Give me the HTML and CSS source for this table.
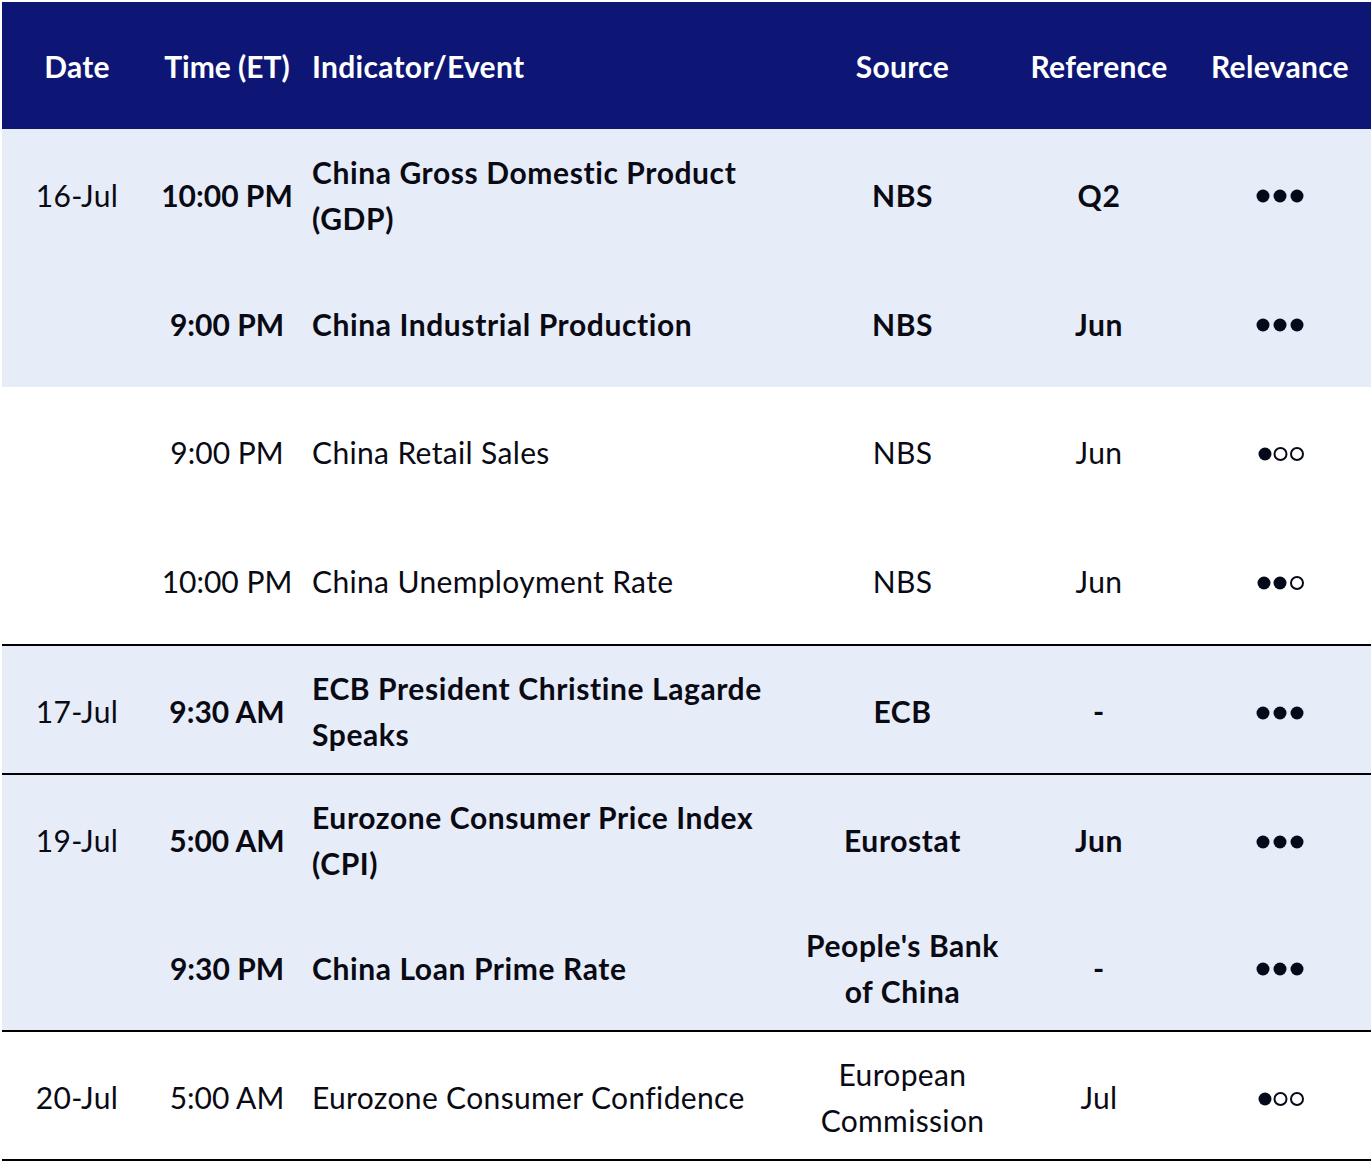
FILE: index.html
```html
<!DOCTYPE html>
<html>
<head>
<meta charset="utf-8">
<link rel="stylesheet" href="styles.css">
</head>
<body>
<div class="table">
  <div class="row head">
    <div class="c date">Date</div>
    <div class="c time">Time (ET)</div>
    <div class="c ind">Indicator/Event</div>
    <div class="c src">Source</div>
    <div class="c ref">Reference</div>
    <div class="c rel">Relevance</div>
  </div>

  <div class="group tall">
    <div class="row blue bold">
      <div class="c date norm">16-Jul</div>
      <div class="c time">10:00 PM</div>
      <div class="c ind">China Gross Domestic Product<br>(GDP)</div>
      <div class="c src">NBS</div>
      <div class="c ref">Q2</div>
      <div class="c rel"><svg class="dots" width="50" height="16" viewBox="0 0 50 16"><circle cx="8" cy="8" r="6.5"/><circle cx="25" cy="8" r="6.5"/><circle cx="42" cy="8" r="6.5"/></svg></div>
    </div>
    <div class="row blue bold">
      <div class="c date"></div>
      <div class="c time">9:00 PM</div>
      <div class="c ind">China Industrial Production</div>
      <div class="c src">NBS</div>
      <div class="c ref">Jun</div>
      <div class="c rel"><svg class="dots" width="50" height="16" viewBox="0 0 50 16"><circle cx="8" cy="8" r="6.5"/><circle cx="25" cy="8" r="6.5"/><circle cx="42" cy="8" r="6.5"/></svg></div>
    </div>
    <div class="row">
      <div class="c date"></div>
      <div class="c time">9:00 PM</div>
      <div class="c ind">China Retail Sales</div>
      <div class="c src">NBS</div>
      <div class="c ref">Jun</div>
      <div class="c rel"><svg class="dots" width="50" height="16" viewBox="0 0 50 16"><circle cx="10" cy="8" r="6.5"/><circle class="hollow" cx="25.5" cy="8" r="6"/><circle class="hollow" cx="42" cy="8" r="6"/></svg></div>
    </div>
    <div class="row">
      <div class="c date"></div>
      <div class="c time">10:00 PM</div>
      <div class="c ind">China Unemployment Rate</div>
      <div class="c src">NBS</div>
      <div class="c ref">Jun</div>
      <div class="c rel"><svg class="dots" width="50" height="16" viewBox="0 0 50 16"><circle cx="9" cy="8" r="6.5"/><circle cx="25" cy="8" r="6.5"/><circle class="hollow" cx="42" cy="8" r="6"/></svg></div>
    </div>
  </div>

  <div class="group short">
    <div class="row blue bold">
      <div class="c date norm">17-Jul</div>
      <div class="c time">9:30 AM</div>
      <div class="c ind">ECB President Christine Lagarde<br>Speaks</div>
      <div class="c src">ECB</div>
      <div class="c ref">-</div>
      <div class="c rel"><svg class="dots" width="50" height="16" viewBox="0 0 50 16"><circle cx="8" cy="8" r="6.5"/><circle cx="25" cy="8" r="6.5"/><circle cx="42" cy="8" r="6.5"/></svg></div>
    </div>
  </div>

  <div class="group mid">
    <div class="row blue bold">
      <div class="c date norm">19-Jul</div>
      <div class="c time">5:00 AM</div>
      <div class="c ind">Eurozone Consumer Price Index<br>(CPI)</div>
      <div class="c src">Eurostat</div>
      <div class="c ref">Jun</div>
      <div class="c rel"><svg class="dots" width="50" height="16" viewBox="0 0 50 16"><circle cx="8" cy="8" r="6.5"/><circle cx="25" cy="8" r="6.5"/><circle cx="42" cy="8" r="6.5"/></svg></div>
    </div>
    <div class="row blue bold">
      <div class="c date"></div>
      <div class="c time">9:30 PM</div>
      <div class="c ind">China Loan Prime Rate</div>
      <div class="c src">People's Bank<br>of China</div>
      <div class="c ref">-</div>
      <div class="c rel"><svg class="dots" width="50" height="16" viewBox="0 0 50 16"><circle cx="8" cy="8" r="6.5"/><circle cx="25" cy="8" r="6.5"/><circle cx="42" cy="8" r="6.5"/></svg></div>
    </div>
  </div>

  <div class="group short">
    <div class="row">
      <div class="c date">20-Jul</div>
      <div class="c time">5:00 AM</div>
      <div class="c ind">Eurozone Consumer Confidence</div>
      <div class="c src">European<br>Commission</div>
      <div class="c ref">Jul</div>
      <div class="c rel"><svg class="dots" width="50" height="16" viewBox="0 0 50 16"><circle cx="10" cy="8" r="6.5"/><circle class="hollow" cx="25.5" cy="8" r="6"/><circle class="hollow" cx="42" cy="8" r="6"/></svg></div>
    </div>
  </div>
</div>
</body>
</html>
```

FILE: styles.css
```css
html, body {
  margin: 0;
  padding: 0;
  background: #ffffff;
}

body {
  padding: 2px 0 0 2px;
  font-family: Lato, "Open Sans", "Liberation Sans", sans-serif;
  color: #0a0a14;
}

.table {
  width: 1369px;
}

.row {
  display: grid;
  grid-template-columns: 150px 150px 498px 205px 188px 178px;
  height: 128px;
  font-size: 30px;
  line-height: 46px;
  letter-spacing: 0.35px;
}

.group.tall .row {
  height: 128.75px;
}

.group.mid .row {
  height: 127.5px;
}

.group.short .row {
  height: 127px;
}

.row .c {
  padding-top: 3px;
}

.row.head {
  height: 127px;
  background: #0d1675;
  color: #ffffff;
  font-weight: 700;
  letter-spacing: 0.3px;
}

.row.head .c {
  padding-top: 0;
}

.row.blue {
  background: #e7edf8;
}

.row.bold .c {
  font-weight: 700;
  letter-spacing: 0.6px;
}

.row.bold .c.norm {
  font-weight: 400;
  letter-spacing: 0.35px;
}

.row .c.time {
  letter-spacing: 0;
}

.group {
  border-bottom: 2px solid #000000;
}

.c {
  display: flex;
  align-items: center;
  justify-content: center;
  text-align: center;
}

.c.ind {
  justify-content: flex-start;
  text-align: left;
  padding-left: 10px;
}

.c.rel {
  padding-right: 4px;
}

.dots {
  margin-top: 3px;
}

.dots circle {
  fill: #050a1a;
}

.dots circle.hollow {
  fill: none;
  stroke: #050a1a;
  stroke-width: 2;
}
```
